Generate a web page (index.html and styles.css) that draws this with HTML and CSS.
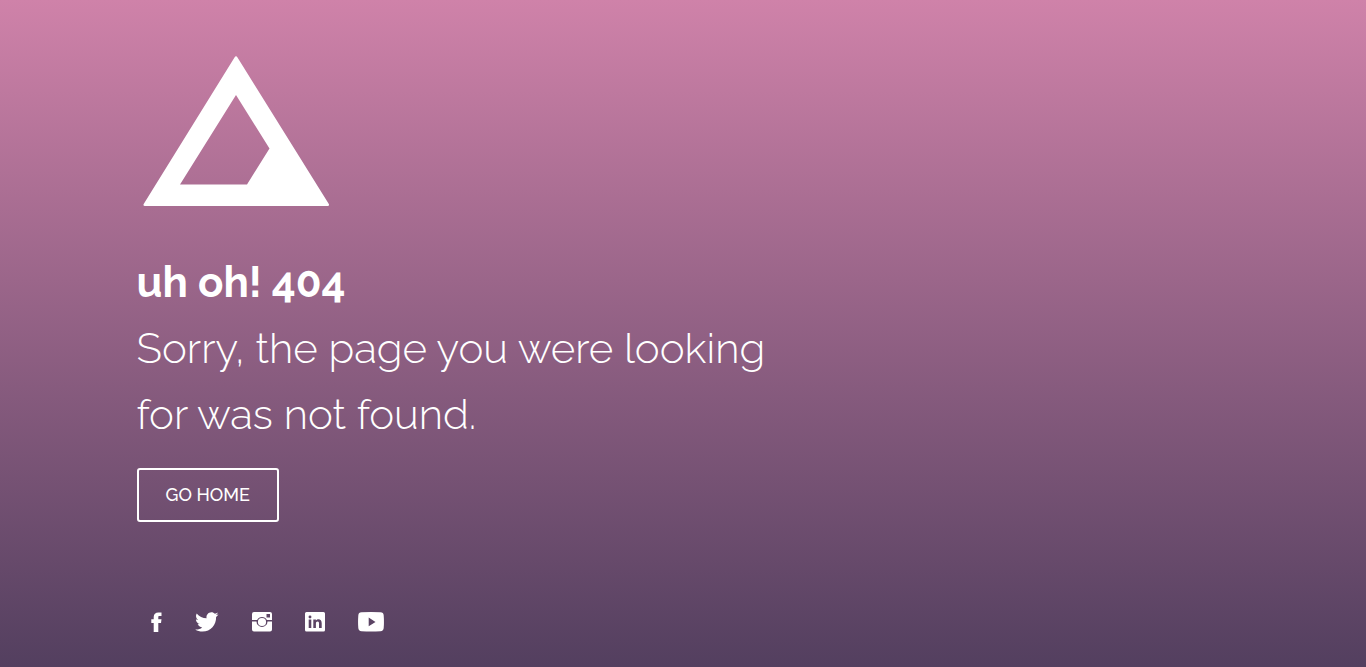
FILE: index.html
```html
<!DOCTYPE html>
<html lang="en">
<head>
<meta charset="utf-8">
<meta name="viewport" content="width=device-width, initial-scale=1">
<title>404</title>
<link rel="stylesheet" href="styles.css">
</head>
<body>
<main class="page">
  <svg class="logo" viewBox="0 0 200 168" aria-hidden="true">
    <path fill="#fff" fill-rule="evenodd" d="M97.500 9.500Q99 7 100.500 9.500L191.500 155.500Q193 158 190.500 158H8Q5.500 158 7 155.500ZM99 47L43 136.500H110L132.500 100.500Z"/>
  </svg>
  <h1 class="title">uh oh! 404</h1>
  <p class="message">Sorry, the page you were looking for was not found.</p>
  <a class="button" href="#">GO HOME</a>
  <nav class="social" aria-label="Social media">
    <a href="#" aria-label="Facebook"><svg width="11" height="20" viewBox="0 0 11 20"><path fill="#fff" d="M10.500.500V4H8.500C7.500 4 7.300 4.500 7.300 5.200V7.200H10.500L10 11H7.300V20H2.700V11H.3V7.200H2.700V5C2.700 2 4.500.500 7.400.500Z"/></svg></a>
    <a href="#" aria-label="Twitter"><svg width="24" height="20" viewBox="0 0 24 20"><path fill="#fff" d="M23.500 2.500c-.7 1-1.500 1.800-2.400 2.400.3 7.800-5.400 14.600-13.600 14.600-2.700 0-5.200-.8-7.300-2.100 2.500.3 5-.4 7-2-2.100 0-3.900-1.400-4.500-3.300.7.100 1.400.1 2.100-.1-2.300-.5-3.900-2.400-3.900-4.800.7.400 1.400.6 2.200.6C1.100 6.500.300 3.700 1.700 1.400c2.400 2.900 6 4.700 9.900 4.900C10.900 3.200 13.200.200 16.400.200c1.400 0 2.700.6 3.500 1.500 1.100-.2 2.100-.6 3-1.200-.4 1.100-1.100 2-2.100 2.600 1-.1 1.900-.3 2.700-.6Z"/></svg></a>
    <a href="#" aria-label="Instagram"><svg width="20" height="20" viewBox="0 0 20 20"><path fill="#fff" fill-rule="evenodd" d="M2 0H18Q20 0 20 2V8H14.900A5.500 5.500 0 0 0 5.100 8H0V2Q0 0 2 0ZM14.500 2V5.500H18V2ZM0 9.400H4.500A5.500 5.500 0 1 0 15.500 9.400H20V17.500Q20 19.500 18 19.500H2Q0 19.500 0 17.500Z"/><circle cx="10" cy="10" r="4.100" fill="#fff"/></svg></a>
    <a href="#" aria-label="LinkedIn"><svg width="20" height="20" viewBox="0 0 20 20"><path fill="#fff" fill-rule="evenodd" d="M1.500 0H18.500Q20 0 20 1.500V18Q20 19.500 18.500 19.500H1.500Q0 19.500 0 18V1.500Q0 0 1.500 0ZM3.700 7.500V16H6.300V7.500ZM5 3.500A1.450 1.450 0 1 0 5 6.400A1.450 1.450 0 1 0 5 3.500ZM8.300 7.500V16H10.900V11.700C10.900 10.400 11.500 9.500 12.600 9.500S14 10.300 14 11.600V16H16.700V11.200C16.700 8.600 15.400 7.300 13.500 7.300C12.200 7.300 11.400 7.900 10.900 8.700V7.500Z"/></svg></a>
    <a href="#" aria-label="YouTube"><svg width="26" height="20" viewBox="0 0 26 20"><path fill="#fff" fill-rule="evenodd" d="M3.500.300Q13-.300 22.500.300Q25.500.400 25.700 3.500Q26.200 10 25.700 16Q25.500 19 22.500 19.200Q13 19.800 3.500 19.200Q.500 19 .300 16Q-.2 10 .3 3.500Q.5.400 3.500.300ZM10.700 5.500V14.300L17.500 9.900Z"/></svg></a>
  </nav>
</main>
</body>
</html>
```
FILE: styles.css
```css
* { box-sizing: border-box; }
body {
  margin: 0;
  min-height: 100vh;
  background: linear-gradient(#cf82a9, #533f5f);
  color: #fff;
  font-family: Raleway, Lato, "Open Sans", sans-serif;
}
.page {
  display: flex;
  flex-direction: column;
  align-items: flex-start;
  padding: 48px 10% 32px;
}
.logo { width: 200px; height: auto; }
.title,
.message {
  margin: 0;
  max-width: 660px;
  font-size: 42px;
  line-height: 66px;
}
.title { margin-top: 34px; font-weight: 700; }
.message { font-weight: 300; }
.button {
  margin-top: 20px;
  padding: 13px 27px;
  border: 2px solid #fff;
  border-radius: 3px;
  color: #fff;
  font-size: 18px;
  font-weight: 500;
  line-height: 24px;
  text-decoration: none;
}
.social {
  display: flex;
  gap: 33px;
  margin: 90px 0 0 14px;
}
.social a { display: flex; }
```
